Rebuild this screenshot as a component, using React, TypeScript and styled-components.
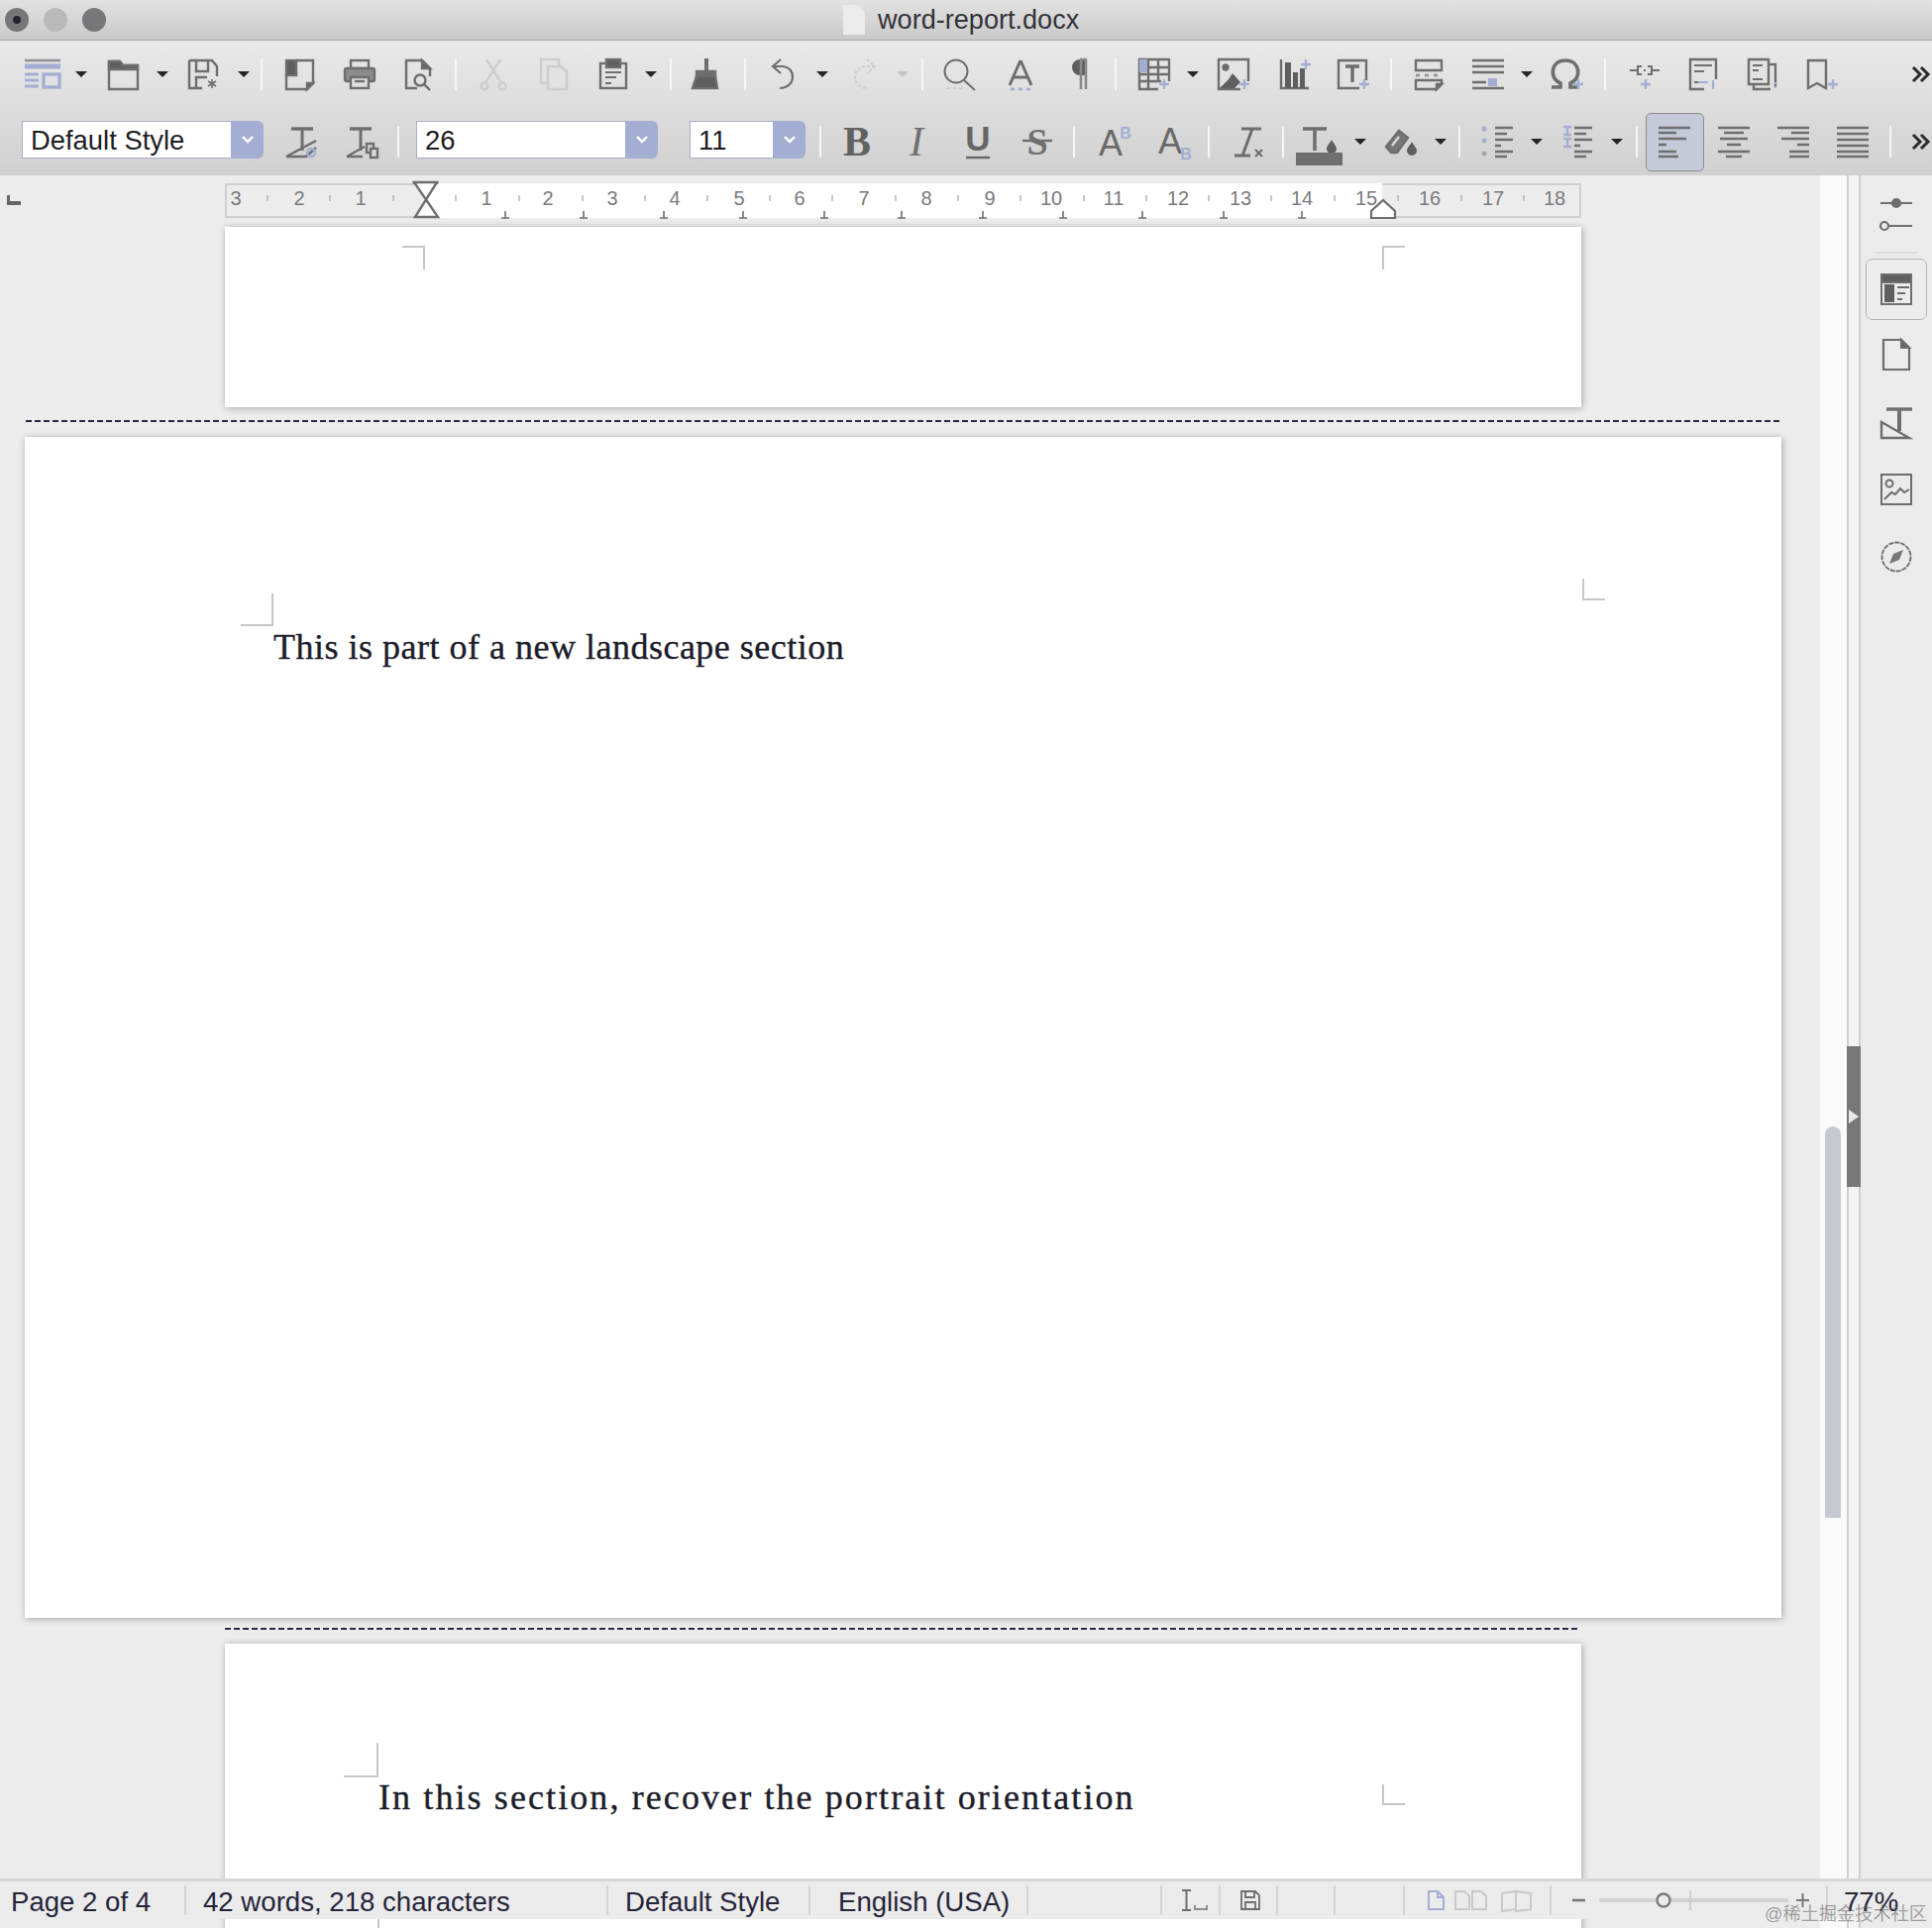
import React from "react";
import styled, { createGlobalStyle } from "styled-components";

const INK = "#6e6e6e";
const ACC = "#a4aed2";
const FAINT = "#cdcdcd";

const Global = createGlobalStyle`
  html, body { margin: 0; padding: 0; background: #ececec; }
  body { font-family: "Liberation Sans", Arial, sans-serif; }
`;

const Shell = styled.div`
  position: relative;
  width: 1950px;
  height: 1946px;
  overflow: hidden;
  display: flex;
  flex-direction: column;
  background: #ececec;
`;

/* title bar */
const TitleBar = styled.div`
  height: 40px;
  flex: none;
  display: flex;
  align-items: center;
  padding-left: 5px;
  background: linear-gradient(#e2e2e2, #c9c9c9);
  border-bottom: 1px solid #a6a6a6;
`;
const Lights = styled.div`
  display: flex;
  gap: 15px;
  margin-top: -1px;
`;
const Light = styled.span<{ $c: string }>`
  width: 24px;
  height: 24px;
  border-radius: 50%;
  background: ${(p) => p.$c};
  display: flex;
  align-items: center;
  justify-content: center;
`;
const LightDot = styled.span`
  width: 8px;
  height: 8px;
  border-radius: 50%;
  background: #23232b;
`;
const TitleCenter = styled.div`
  margin-left: 744px;
  display: flex;
  align-items: center;
  gap: 13px;
`;
const TitleText = styled.span`
  font-size: 27.1px;
  color: #33333a;
`;

/* toolbars */
const Toolbars = styled.div`
  flex: none;
  height: 136px;
  background: linear-gradient(#e9e9e9, #d0d0d0);
`;
const Row = styled.div`
  height: 68px;
  display: flex;
  align-items: center;
`;
const Slot = styled.div<{ $w: number; $gap: number }>`
  flex: none;
  width: ${(p) => p.$w}px;
  margin-left: ${(p) => p.$gap}px;
  display: flex;
  align-items: center;
  justify-content: center;
`;
const Sep = styled.div`
  width: 2px;
  height: 32px;
  background: #f6f6f6;
`;
const Caret = styled.div<{ $off?: boolean }>`
  width: 0;
  height: 0;
  border-left: 6px solid transparent;
  border-right: 6px solid transparent;
  border-top: 6px solid ${(p) => (p.$off ? "#c4c4c4" : "#25252b")};
`;
const Combo = styled.div`
  width: 100%;
  height: 38px;
  margin-top: -4px;
  display: flex;
`;
const ComboField = styled.div`
  flex: 1;
  box-sizing: border-box;
  background: #fff;
  border: 1px solid #a8aec4;
  border-right: none;
  padding-left: 8px;
  font-size: 27.4px;
  line-height: 38px;
  color: #1d1d24;
`;
const ComboBtn = styled.div`
  width: 33px;
  flex: none;
  background: ${ACC};
  border-radius: 0 6px 6px 0;
  display: flex;
  align-items: center;
  justify-content: center;
`;
const Active = styled.div`
  box-sizing: border-box;
  width: 59px;
  height: 59px;
  display: flex;
  align-items: center;
  justify-content: center;
  background: #c5cad8;
  border: 1px solid #8c8c94;
  border-radius: 5px;
`;
const Svg = styled.svg`
  display: block;
  overflow: visible;
`;

const Ico: React.FC<{ children: React.ReactNode; c?: string; sw?: number }> = ({ children, c = INK, sw = 2.4 }) => (
  <Svg width="36" height="32" viewBox="0 0 36 32" fill="none" stroke={c} strokeWidth={sw}>
    {children}
  </Svg>
);
const Plus = ({ x = 30, y = 26 }: { x?: number; y?: number }) => (
  <path d={`M${x - 5} ${y}h10M${x} ${y - 5}v10`} stroke={ACC} strokeWidth={2.4} />
);
const GlyphText = styled.text`
  font-family: "Liberation Sans", Arial, sans-serif;
  stroke: none;
`;
const SerifGlyph = styled.text`
  font-family: "Liberation Serif", "Times New Roman", serif;
  stroke: none;
`;
const lines = (rows: [number, number, number][], c = INK, sw = 2.6) => (
  <path d={rows.map(([x, y, w]) => `M${x} ${y}h${w}`).join("")} stroke={c} strokeWidth={sw} />
);

const icons: Record<string, React.ReactNode> = {
  sidebar: (
    <Ico c={ACC}>
      <path d="M0 2h36" stroke="#8f8f96" />
      <path d="M0 8h36" strokeWidth={5} />
      <path d="M0 16h14M0 22h14M0 28h14" strokeWidth={3} />
      <rect x="19" y="16" width="16" height="13" strokeWidth={3.4} />
    </Ico>
  ),
  open: (
    <Ico>
      <path d="M4 3h11l3 4h15v24H4z" />
      <path d="M4 3h11l3 4h15v4H4z" fill="#5f5f5f" />
    </Ico>
  ),
  save: (
    <Ico>
      <path d="M4 2h23l5 6v10M4 2v28h13M11 2v11h12V2M11 30v-11h11" />
      <path d="M27 21v9M23 23l8 5M31 23l-8 5" strokeWidth={1.6} />
    </Ico>
  ),
  pdf: (
    <Ico>
      <path d="M15 2h17v23l-6 6H5V16" />
      <rect x="5" y="2" width="10" height="15" fill="#5f5f5f" />
      <path d="M26 31v-6h6z" fill="#5f5f5f" />
    </Ico>
  ),
  print: (
    <Ico>
      <rect x="9" y="2" width="18" height="8" />
      <rect x="3" y="10" width="30" height="13" rx="2" fill="#8b8b8b" />
      <rect x="9" y="19" width="18" height="11" fill="#dedede" />
      <path d="M13 23h10" />
    </Ico>
  ),
  preview: (
    <Ico>
      <path d="M17 30H6V2h16l8 8v8" />
      <path d="M22 2l8 8h-8z" fill="#5f5f5f" />
      <circle cx="20" cy="22" r="5.5" />
      <path d="M24 26l6 6" />
    </Ico>
  ),
  cut: (
    <Ico c={FAINT}>
      <path d="M11 1l14 22M25 1L11 23" />
      <circle cx="9" cy="28" r="3.5" />
      <circle cx="27" cy="28" r="3.5" />
    </Ico>
  ),
  copy: (
    <Ico c={FAINT}>
      <rect x="5" y="1" width="18" height="24" />
      <path d="M12 8h13l6 5v18H12z" fill="#e2e2e2" />
    </Ico>
  ),
  paste: (
    <Ico>
      <rect x="5" y="5" width="26" height="25" />
      <rect x="11" y="1" width="14" height="8" fill="#5f5f5f" />
      <path d="M10 14h16M10 19h11M10 25h6" strokeWidth={2} />
    </Ico>
  ),
  brush: (
    <Ico>
      <path d="M19 0v12" strokeWidth={4} />
      <path d="M9 13h19v5H9z" fill="#6e6e6e" />
      <path d="M9 18h19l2 12H5z" fill="#5f5f5f" />
    </Ico>
  ),
  undo: (
    <Ico sw={2.2}>
      <path d="M15 1L7 8l8 7M7 8h9c15 0 15 22-2 22" />
    </Ico>
  ),
  redo: (
    <Ico c={FAINT} sw={2.2}>
      <path d="M21 1l8 7-8 7M29 8h-9C5 8 5 30 22 30" strokeDasharray="3 2" />
    </Ico>
  ),
  find: (
    <Ico sw={2}>
      <circle cx="15" cy="13" r="11.5" />
      <path d="M23 22l11 10" />
      <path d="M6 30h16" stroke={FAINT} strokeDasharray="3 3" />
    </Ico>
  ),
  fontwork: (
    <Ico sw={3}>
      <path d="M18 2L7 27M18 2l11 25M11 19h14" />
      <path d="M8 31h20" stroke={ACC} strokeWidth={3} strokeDasharray="4 4" />
    </Ico>
  ),
  pilcrow: (
    <Ico>
      <path d="M19 1h6v16h-6a8 8 0 0 1 0-16z" fill="#5f5f5f" stroke="none" />
      <path d="M19 1h7M20 1v30M25 1v30" stroke="#8a8a8a" strokeWidth={2.6} />
    </Ico>
  ),
  table: (
    <Ico>
      <path d="M22 31H3V1h30v22M3 9h30M3 16h30M3 23h22M12 1v30M22 1v22" />
      <rect x="3" y="1" width="8" height="13" fill={ACC} stroke="none" />
      <Plus x={28} y={26} />
    </Ico>
  ),
  image: (
    <Ico>
      <path d="M24 31H2V1h30v22" />
      <circle cx="9" cy="9" r="2.5" fill="#5f5f5f" />
      <path d="M3 30l9-9 4-6 8 9-6 6z" fill="#5f5f5f" stroke="none" />
      <Plus x={28} y={26} />
    </Ico>
  ),
  chart: (
    <Ico>
      <path d="M5 1v29h28" />
      <path d="M9 4h6v26H9zM17 14h5v16h-5zM24 10h5v20h-5z" fill="#5f5f5f" stroke="none" />
      <Plus x={30} y={6} />
    </Ico>
  ),
  text: (
    <Ico>
      <path d="M24 30H3V2h28v20" />
      <path d="M10 8h14M17 8v16" strokeWidth={3.4} />
      <Plus x={29} y={26} />
    </Ico>
  ),
  pagebreak: (
    <Ico>
      <path d="M5 2h26v10H5zM5 22h26v4l-5 5H5z" />
      <path d="M5 17h26" stroke="#9a9a9a" strokeWidth={3} strokeDasharray="4 5" />
      <path d="M26 31v-5h5z" fill="#5f5f5f" />
    </Ico>
  ),
  field: (
    <Ico>
      {lines([[2, 2, 32], [2, 8, 32], [2, 14, 32], [2, 24, 14], [2, 30, 32]])}
      <rect x="18" y="20" width="9" height="8" fill={ACC} stroke="none" />
    </Ico>
  ),
  omega: (
    <Ico sw={3.6}>
      <path d="M2 29h9v-4C-1 20 1 2 16 2s17 18 5 23v4h7" />
      <Plus x={29} y={26} />
    </Ico>
  ),
  link: (
    <Ico sw={2}>
      <path d="M3 12h8M25 12h8M15 8h-4v8h4M21 8h4v8h-4M17 12h2" />
      <Plus x={19} y={26} />
    </Ico>
  ),
  foot: (
    <Ico>
      <path d="M20 31H6V1h26v20" />
      {lines([[10, 7, 18], [10, 13, 10], [10, 24, 8]], INK, 2)}
      <path d="M14 24h10M29 22v9" stroke={ACC} strokeWidth={2.2} />
    </Ico>
  ),
  end: (
    <Ico>
      <path d="M8 26H4V1h20v25H8zM24 6h7v22M9 26v5h17" />
      {lines([[8, 7, 10], [8, 12, 6], [8, 21, 10]], INK, 2)}
      <path d="M31 24v7" stroke={ACC} strokeDasharray="2 2" />
    </Ico>
  ),
  bookmark: (
    <Ico>
      <path d="M4 2h18v28l-9-5-9 5z" />
      <Plus x={29} y={26} />
    </Ico>
  ),
  more: (
    <Ico c="#2a2a32" sw={3}>
      <path d="M8 9l7 7-7 7M16 9l7 7-7 7" />
    </Ico>
  ),
  clearDirect: (
    <Ico>
      <path d="M7 3h22" strokeWidth={3.4} />
      <path d="M18 3v22" strokeWidth={3} />
      <path d="M2 31h20L32 22" />
      <path d="M2 31l30-16" />
      <circle cx="27" cy="27" r="4" stroke={ACC} />
    </Ico>
  ),
  newStyle: (
    <Ico>
      <path d="M5 3h22" strokeWidth={3.4} />
      <path d="M16 3v22" strokeWidth={3} />
      <path d="M2 31h16M2 31l18-10" />
      <rect x="22" y="18" width="7" height="9" />
      <rect x="26" y="23" width="7" height="9" fill="#d8d8d8" />
    </Ico>
  ),
  bold: (
    <Ico>
      <SerifGlyph x="18" y="30" fontSize="42" fontWeight="700" textAnchor="middle" fill="#616161">B</SerifGlyph>
    </Ico>
  ),
  italic: (
    <Ico>
      <SerifGlyph x="17" y="30" fontSize="42" fontStyle="italic" textAnchor="middle" fill="#707070">I</SerifGlyph>
    </Ico>
  ),
  underline: (
    <Ico>
      <GlyphText x="17" y="25" fontSize="35" fontWeight="700" textAnchor="middle" fill="#666">U</GlyphText>
      <path d="M5 32h24" stroke="#666" />
    </Ico>
  ),
  strike: (
    <Ico>
      <SerifGlyph x="18" y="29" fontSize="38" fontWeight="700" textAnchor="middle" fill="#707070">S</SerifGlyph>
      <path d="M3 15h30" />
    </Ico>
  ),
  sup: (
    <Ico>
      <GlyphText x="14" y="30" fontSize="36" textAnchor="middle" fill="#6a6a6a" stroke="#6a6a6a">A</GlyphText>
      <GlyphText x="29" y="13" fontSize="16" fontWeight="700" textAnchor="middle" fill={ACC}>B</GlyphText>
    </Ico>
  ),
  sub: (
    <Ico>
      <GlyphText x="13" y="28" fontSize="36" textAnchor="middle" fill="#6a6a6a">A</GlyphText>
      <GlyphText x="29" y="34" fontSize="16" fontWeight="700" textAnchor="middle" fill={ACC}>B</GlyphText>
    </Ico>
  ),
  clearFmt: (
    <Ico>
      <path d="M12 3h20M23 3L13 30M5 30h16" strokeWidth={3} />
      <path d="M26 24l7 7M33 24l-7 7" strokeWidth={2} />
    </Ico>
  ),
  fontColor: (
    <Ico>
      <path d="M1 3h24M13 3v22" strokeWidth={3.6} />
      <path d="M30 14c-2 4-5 6-5 9a5 5 0 0 0 10 0c0-3-3-5-5-9z" fill="#5f5f5f" stroke="none" />
      <rect x="-6" y="27" width="47" height="13" fill="#6f6f6f" stroke="none" />
    </Ico>
  ),
  highlight: (
    <Ico>
      <path d="M2 21L15 5l9 7-11 15H7z" fill="#777" />
      <path d="M8 20l7-9" stroke="#d8d8d8" />
      <path d="M28 16c-2 4-5 6-5 9a5 5 0 0 0 10 0c0-3-3-5-5-9z" fill="#5f5f5f" stroke="none" />
    </Ico>
  ),
  bullets: (
    <Ico>
      <circle cx="5" cy="3" r="2.5" fill={ACC} stroke="none" />
      <circle cx="5" cy="15" r="2.5" fill={ACC} stroke="none" />
      <circle cx="5" cy="28" r="2.5" fill="#a8a8a8" stroke="none" />
      {lines([[16, 2, 18], [16, 8, 12], [16, 14, 18], [16, 20, 6], [16, 26, 18], [16, 31, 12]])}
    </Ico>
  ),
  numbered: (
    <Ico>
      <path d="M3 1h8M7 1v8M3 9h8M3 13h8M7 13v8M3 21h8" stroke={ACC} strokeWidth={2.4} />
      {lines([[14, 2, 18], [14, 8, 12], [14, 14, 18], [14, 20, 6], [14, 26, 18], [14, 31, 12]])}
    </Ico>
  ),
  alignL: <Ico>{lines([[2, 2, 32], [2, 7, 18], [2, 13, 28], [2, 19, 8], [2, 26, 18], [2, 31, 20]])}</Ico>,
  alignC: <Ico>{lines([[2, 2, 32], [8, 7, 20], [4, 13, 28], [11, 19, 14], [2, 26, 32], [10, 31, 16]])}</Ico>,
  alignR: <Ico>{lines([[2, 2, 32], [16, 7, 18], [6, 13, 28], [22, 19, 12], [14, 26, 20], [14, 31, 20]])}</Ico>,
  justify: <Ico>{lines([[2, 2, 32], [2, 8, 32], [2, 14, 32], [2, 20, 32], [2, 26, 32], [2, 31, 32]])}</Ico>,
};

const Chevron = () => (
  <Svg width="14" height="10" viewBox="0 0 14 10" fill="none" stroke="#fff" strokeWidth={2.4}>
    <path d="M2 2l5 5 5-5" />
  </Svg>
);

type Item =
  | { k: "i"; n: string; c: number }
  | { k: "a"; c: number; off?: boolean }
  | { k: "s"; c: number }
  | { k: "combo"; label: string; left: number; w: number }
  | { k: "active"; n: string; c: number };

const i = (n: string, c: number): Item => ({ k: "i", n, c });
const a = (c: number, off?: boolean): Item => ({ k: "a", c, off });
const s = (c: number): Item => ({ k: "s", c });

const row1: Item[] = [
  i("sidebar", 43), a(82), i("open", 124), a(164), i("save", 205), a(246), s(264),
  i("pdf", 302), i("print", 363), i("preview", 422), s(460),
  i("cut", 498), i("copy", 559), i("paste", 619), a(657), s(677),
  i("brush", 712), s(752), i("undo", 791), a(830), i("redo", 872), a(911, true), s(931),
  i("find", 968), i("fontwork", 1030), i("pilcrow", 1089), s(1126),
  i("table", 1165), a(1204), i("image", 1246), i("chart", 1306), i("text", 1366), s(1404),
  i("pagebreak", 1442), i("field", 1502), a(1541), i("omega", 1582), s(1620),
  i("link", 1660), i("foot", 1718), i("end", 1779), i("bookmark", 1839), i("more", 1941),
];
const row2: Item[] = [
  { k: "combo", label: "Default Style", left: 22, w: 244 },
  i("clearDirect", 305), i("newStyle", 366), s(402),
  { k: "combo", label: "26", left: 420, w: 244 },
  { k: "combo", label: "11", left: 696, w: 117 },
  s(828), i("bold", 865), i("italic", 926), i("underline", 988), i("strike", 1047), s(1084),
  i("sup", 1125), i("sub", 1186), s(1220), i("clearFmt", 1259), s(1295),
  i("fontColor", 1332), a(1373), i("highlight", 1415), a(1454), s(1473),
  i("bullets", 1511), a(1551), i("numbered", 1593), a(1632), s(1652),
  { k: "active", n: "alignL", c: 1690 }, i("alignC", 1750), i("alignR", 1810), i("justify", 1870), s(1908),
  i("more", 1941),
];

const ToolRow: React.FC<{ items: Item[] }> = ({ items }) => {
  let right = 0;
  return (
    <Row>
      {items.map((it, idx) => {
        const w = it.k === "combo" ? it.w : it.k === "s" ? 2 : it.k === "a" ? 12 : it.k === "active" ? 59 : 36;
        const left = it.k === "combo" ? it.left : it.c - w / 2;
        const gap = left - right;
        right = left + w;
        return (
          <Slot key={idx} $w={w} $gap={gap}>
            {it.k === "i" && icons[it.n]}
            {it.k === "a" && <Caret $off={it.off} />}
            {it.k === "s" && <Sep />}
            {it.k === "active" && <Active>{icons[it.n]}</Active>}
            {it.k === "combo" && (
              <Combo>
                <ComboField>{it.label}</ComboField>
                <ComboBtn>
                  <Chevron />
                </ComboBtn>
              </Combo>
            )}
          </Slot>
        );
      })}
    </Row>
  );
};

/* main area */
const Main = styled.div`
  flex: 1;
  min-height: 0;
  display: flex;
`;
const DocArea = styled.div`
  width: 1837px;
  flex: none;
  overflow: hidden;
  display: flex;
  flex-direction: column;
`;
const RulerRow = styled.div`
  flex: none;
  height: 52px;
  padding-top: 8px;
  box-sizing: border-box;
  display: flex;
`;
const TabCorner = styled.div`
  width: 14px;
  height: 10px;
  margin: 12px 0 0 7px;
  border-left: 3px solid #666;
  border-bottom: 4px solid #666;
  box-sizing: border-box;
`;
const RulerWrap = styled.div`
  margin-left: 206px;
`;
const RulerText = styled.text`
  font-family: "Liberation Sans", Arial, sans-serif;
  font-size: 20px;
  fill: #7a7a7e;
`;

const nums: [string, number][] = [
  ["3", 238], ["2", 302], ["1", 364], ["1", 491], ["2", 553], ["3", 618], ["4", 681], ["5", 746], ["6", 807],
  ["7", 872], ["8", 935], ["9", 999], ["10", 1061], ["11", 1124], ["12", 1189], ["13", 1252], ["14", 1314],
  ["15", 1379], ["16", 1443], ["17", 1507], ["18", 1569],
];
const minor = [270, 333, 397, 460, 524, 588, 651, 714, 777, 840, 904, 967, 1030, 1094, 1157, 1220, 1283, 1347, 1411, 1475, 1538];
const stops = [510, 589, 670, 750, 832, 910, 992, 1073, 1153, 1235, 1314];

const Ruler = () => (
  <Svg width="1369" height="40" viewBox="227 185 1369 40">
    <rect x="228" y="186" width="1367" height="33" fill="#ececec" stroke="#cfcfcf" strokeWidth="2" />
    <rect x="429" y="185" width="966" height="35" fill="#fff" />
    {minor.map((x) => (
      <path key={x} d={`M${x} 197v6`} stroke="#b5b5b5" strokeWidth="1.5" />
    ))}
    {nums.map(([t, x], n) => (
      <RulerText key={n} x={x} y={207} textAnchor="middle">{t}</RulerText>
    ))}
    {stops.map((x) => (
      <path key={x} d={`M${x} 213v7M${x - 4} 220h8`} stroke="#6e6e6e" strokeWidth="1.6" fill="none" />
    ))}
    <path d="M418 184h23L419 219h23z" fill="#fff" stroke="#6e6e6e" strokeWidth="2.4" />
    <path d="M418 184v2M441 184v2M419 219v1M442 219v1" stroke="#6e6e6e" strokeWidth="2.4" />
    <path d="M1384 220v-7l12-11 12 11v7z" fill="#fff" stroke="#6e6e6e" strokeWidth="2.2" />
  </Svg>
);

const Page = styled.div<{ $w: number; $h: number; $ml: number; $pl: number; $pt: number }>`
  position: relative;
  flex: none;
  box-sizing: border-box;
  width: ${(p) => p.$w}px;
  height: ${(p) => p.$h}px;
  margin-left: ${(p) => p.$ml}px;
  padding: ${(p) => p.$pt}px 0 0 ${(p) => p.$pl}px;
  background: #fff;
  box-shadow: 1px 1px 7px rgba(0, 0, 0, 0.3);
`;
const PageText = styled.p<{ $ls: number }>`
  margin: 0;
  font-family: "Liberation Serif", "Times New Roman", serif;
  font-size: 36px;
  line-height: 40px;
  letter-spacing: ${(p) => p.$ls}px;
  -webkit-text-stroke: 0.35px #1c1c2a;
  color: #1c1c2a;
  white-space: nowrap;
`;
const Crop = styled.div<{ $x: number; $y: number; $w: number; $h: number; $t?: boolean; $r?: boolean; $b?: boolean; $l?: boolean }>`
  position: absolute;
  box-sizing: border-box;
  left: ${(p) => p.$x}px;
  top: ${(p) => p.$y}px;
  width: ${(p) => p.$w}px;
  height: ${(p) => p.$h}px;
  border-style: solid;
  border-color: #c6c6c6;
  border-width: ${(p) => `${p.$t ? 2 : 0}px ${p.$r ? 2 : 0}px ${p.$b ? 2 : 0}px ${p.$l ? 2 : 0}px`};
`;
const Dashed = styled.div<{ $ml: number; $w: number; $mt: number; $mb: number }>`
  flex: none;
  height: 2px;
  width: ${(p) => p.$w}px;
  margin: ${(p) => p.$mt}px 0 ${(p) => p.$mb}px ${(p) => p.$ml}px;
  background: repeating-linear-gradient(90deg, #2a2a48 0 6px, transparent 6px 9px);
`;

const ScrollTrack = styled.div`
  width: 27px;
  flex: none;
  background: #fafafa;
  padding: 960px 6px 0 5px;
  box-sizing: border-box;
`;
const Thumb = styled.div`
  height: 395px;
  background: #c6cad0;
  border-radius: 8px 8px 0 0;
`;
const Splitter = styled.div`
  width: 14px;
  flex: none;
  box-sizing: border-box;
  border-left: 2px solid #cfcfcf;
  border-right: 2px solid #cfcfcf;
  background: #f4f4f4;
  padding-top: 879px;
`;
const Handle = styled.div`
  height: 142px;
  margin: 0 -2px;
  background: #77777c;
  display: flex;
  align-items: center;
  justify-content: center;
`;
const HandleArrow = styled.div`
  width: 0;
  height: 0;
  border-top: 7px solid transparent;
  border-bottom: 7px solid transparent;
  border-left: 10px solid #eaeaea;
`;
const SideBar = styled.div`
  flex: 1;
  background: #ebebeb;
  display: flex;
  flex-direction: column;
  align-items: center;
  padding-top: 22px;
`;
const SideItem = styled.div<{ $sel?: boolean; $mt: number }>`
  box-sizing: border-box;
  width: 62px;
  height: 62px;
  flex: none;
  margin-top: ${(p) => p.$mt}px;
  display: flex;
  align-items: center;
  justify-content: center;
  border-radius: 7px;
  ${(p) => p.$sel && "border: 1.5px solid #b4b4b8; background: #ececec;"}
`;
const SideSep = styled.div`
  width: 42px;
  height: 2px;
  background: #dcdcdc;
  margin-top: 17px;
`;

/* status bar */
const StatusBar = styled.div`
  position: absolute;
  left: 0;
  top: 1896px;
  width: 1950px;
  height: 41px;
  box-sizing: border-box;
  background: #ebebeb;
  border-top: 3px solid #d6d6d6;
  display: flex;
  align-items: center;
`;
const Field = styled.div<{ $w: number; $pl?: number; $noLine?: boolean }>`
  flex: none;
  box-sizing: border-box;
  width: ${(p) => p.$w}px;
  height: 30px;
  padding-left: ${(p) => p.$pl ?? 0}px;
  display: flex;
  align-items: center;
  font-size: 27.6px;
  color: #25253a;
  white-space: nowrap;
  border-right: ${(p) => (p.$noLine ? "none" : "2px solid #d4d4d4")};
`;
const FieldText = styled.span`
  display: block;
  padding-top: 4px;
`;
const Watermark = styled.div`
  position: absolute;
  right: 5px;
  bottom: 3px;
  font-family: "Liberation Sans", "Noto Sans CJK SC", sans-serif;
  font-size: 18.2px;
  color: rgba(90, 90, 90, 0.55);
  white-space: nowrap;
`;

export default function App() {
  return (
    <Shell>
      <Global />
      <TitleBar>
        <Lights>
          <Light $c="#77777b"><LightDot /></Light>
          <Light $c="#b9b9b9" />
          <Light $c="#77777b" />
        </Lights>
        <TitleCenter>
          <Svg width="22" height="30" viewBox="0 0 22 30">
            <path d="M0 0h15l7 7v23H0z" fill="#ebebeb" />
          </Svg>
          <TitleText>word-report.docx</TitleText>
        </TitleCenter>
      </TitleBar>
      <Toolbars>
        <ToolRow items={row1} />
        <ToolRow items={row2} />
      </Toolbars>
      <Main>
        <DocArea>
          <RulerRow>
            <TabCorner />
            <RulerWrap>
              <Ruler />
            </RulerWrap>
          </RulerRow>
          <Page $w={1369} $h={182} $ml={227} $pl={0} $pt={0}>
            <Crop $x={179} $y={19} $w={23} $h={24} $t $r />
            <Crop $x={1168} $y={19} $w={23} $h={24} $t $l />
          </Page>
          <Dashed $ml={26} $w={1772} $mt={13} $mb={15} />
          <Page $w={1773} $h={1192} $ml={25} $pl={251} $pt={192}>
            <Crop $x={218} $y={158} $w={33} $h={33} $r $b />
            <Crop $x={1572} $y={143} $w={23} $h={22} $l $b />
            <PageText $ls={0.5}>This is part of a new landscape section</PageText>
          </Page>
          <Dashed $ml={227} $w={1368} $mt={10} $mb={14} />
          <Page $w={1369} $h={300} $ml={227} $pl={155} $pt={135}>
            <Crop $x={120} $y={100} $w={35} $h={35} $r $b />
            <Crop $x={1168} $y={142} $w={23} $h={21} $l $b />
            <Crop $x={154} $y={276} $w={2} $h={20} $l />
            <PageText $ls={2.1}>In this section, recover the portrait orientation</PageText>
          </Page>
        </DocArea>
        <ScrollTrack>
          <Thumb />
        </ScrollTrack>
        <Splitter>
          <Handle>
            <HandleArrow />
          </Handle>
        </Splitter>
        <SideBar>
          <Svg width="36" height="38" viewBox="0 0 36 38" fill="none" stroke={INK} strokeWidth="2.2">
            <path d="M2 6h32M2 29h32" />
            <circle cx="18" cy="6" r="4" fill={INK} />
            <circle cx="6" cy="29" r="4" fill="#ebebeb" />
          </Svg>
          <SideSep />
          <SideItem $sel $mt={5}>
            <Svg width="32" height="32" viewBox="0 0 32 32" fill="none" stroke={INK} strokeWidth="2">
              <rect x="1" y="1" width="30" height="30" />
              <rect x="1" y="1" width="30" height="8" fill="#5f5f5f" />
              <rect x="4" y="11" width="10" height="18" fill="#5f5f5f" stroke="none" />
              <path d="M17 14h12M17 20h8M17 26h5" />
            </Svg>
          </SideItem>
          <SideItem $mt={4}>
            <Svg width="30" height="32" viewBox="0 0 30 32" fill="none" stroke={INK} strokeWidth="2.2">
              <path d="M2 1h18l8 8v22H2z" />
              <path d="M20 1l8 8h-8z" fill="#5f5f5f" />
            </Svg>
          </SideItem>
          <SideItem $mt={7}>
            <Svg width="32" height="32" viewBox="0 0 32 32" fill="none" stroke={INK} strokeWidth="2.4">
              <path d="M6 2h26" strokeWidth={3.4} />
              <path d="M19 2v22" strokeWidth={4} />
              <path d="M1 15v16h28z" />
            </Svg>
          </SideItem>
          <SideItem $mt={5}>
            <Svg width="32" height="32" viewBox="0 0 32 32" fill="none" stroke={INK} strokeWidth="2">
              <rect x="1" y="1" width="30" height="30" />
              <circle cx="9" cy="10" r="3.5" />
              <path d="M4 26l7-7 4 2 5-6 4 4 5-3" />
            </Svg>
          </SideItem>
          <SideItem $mt={6}>
            <Svg width="32" height="32" viewBox="0 0 32 32" fill="none" stroke={INK} strokeWidth="1.8">
              <circle cx="16" cy="16" r="14.5" strokeDasharray="5 1" />
              <path d="M23 9l-4 10-10 4 4-10z" fill="#777" stroke="none" />
            </Svg>
          </SideItem>
        </SideBar>
      </Main>
      <StatusBar>
        <Field $w={188} $pl={11}><FieldText>Page 2 of 4</FieldText></Field>
        <Field $w={426} $pl={17}><FieldText>42 words, 218 characters</FieldText></Field>
        <Field $w={204} $pl={17}><FieldText>Default Style</FieldText></Field>
        <Field $w={220} $pl={28}><FieldText>English (USA)</FieldText></Field>
        <Field $w={135} />
        <Field $w={59} $pl={18}>
          <Svg width="29" height="22" viewBox="0 0 29 22" fill="none" stroke={INK} strokeWidth="2">
            <path d="M2 1h9M2 21h9M6.500 1v20" />
            <path d="M15 16v4h12v-4" stroke="#8e8e8e" />
          </Svg>
        </Field>
        <Field $w={58} $pl={20}>
          <Svg width="20" height="20" viewBox="0 0 20 20" fill="none" stroke={INK} strokeWidth="1.8">
            <path d="M1 1h14l4 4v14H1zM5 1v6h9V1M5 19v-7h10v7" />
          </Svg>
        </Field>
        <Field $w={58} />
        <Field $w={70} />
        <Field $w={148} $pl={22}>
          <Svg width="106" height="20" viewBox="0 0 106 20" fill="none" stroke={ACC} strokeWidth="2">
            <path d="M2 1h9l6 6v12H2zM11 1v6h6" />
            <g stroke="#c9c9c9">
              <path d="M29 1h9l5 5v13H29zM46 1h9l5 5v13H46z" />
              <path d="M76 3l14 -2v18l-14 2zM90 1l15 2v16l-15 2z" />
            </g>
          </Svg>
        </Field>
        <Field $w={279} $pl={20}>
          <Svg width="238" height="24" viewBox="0 0 238 24" fill="none">
            <path d="M1 12h13" stroke="#777" strokeWidth="2.6" />
            <path d="M28 12h191" stroke="#d2d2d2" strokeWidth="4" />
            <path d="M120 2v20" stroke="#cdcdcd" strokeWidth="2" />
            <circle cx="93" cy="12" r="6.500" fill="#ebebeb" stroke="#7b7b7f" strokeWidth="2.4" />
            <path d="M227 12h13M233.500 5v14" stroke="#777" strokeWidth="2" />
          </Svg>
        </Field>
        <Field $w={105} $pl={16} $noLine><FieldText>77%</FieldText></Field>
      </StatusBar>
      <Watermark>@稀土掘金技术社区</Watermark>
    </Shell>
  );
}
